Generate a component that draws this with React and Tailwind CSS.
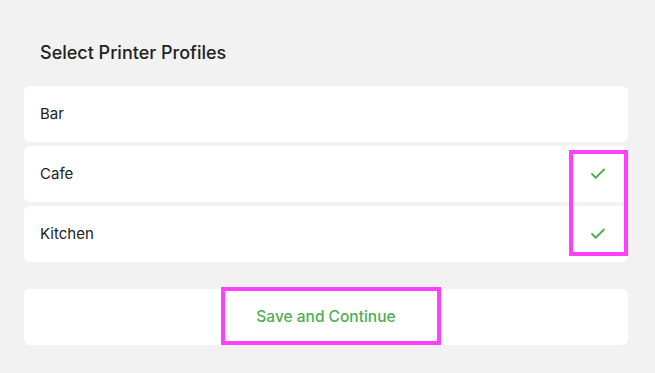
import { Check } from 'lucide-react';

const profiles = [
  { name: 'Bar', selected: false },
  { name: 'Cafe', selected: true },
  { name: 'Kitchen', selected: true },
];

export default function App() {
  return (
    <div className="relative min-h-[373px] w-[655px] bg-[#f2f2f2] pl-6 pr-[27px] pt-[41px] font-['Inter',sans-serif] text-[#222]">
      <h2 className="pl-4 text-[18px] font-medium leading-[24px]">Select Printer Profiles</h2>

      <div className="mt-[21px] flex flex-col gap-1">
        {profiles.map((p) => (
          <div key={p.name} className="flex h-14 items-center justify-between rounded-md bg-white pl-4 pr-[21px]">
            <span className="text-[15px]">{p.name}</span>
            {p.selected && <Check size={18} strokeWidth={2.5} className="text-[#4caf50]" />}
          </div>
        ))}
      </div>

      <button className="mt-[27px] flex h-14 w-full items-center justify-center rounded-md bg-white text-[15.5px] font-medium text-[#4caf50]">
        Save and Continue
      </button>

      {/* annotation boxes */}
      <div className="absolute left-[569px] top-[150px] h-[106px] w-[59px] border-4 border-[#ff40ff]" />
      <div className="absolute left-[221px] top-[287px] h-[58px] w-[220px] border-4 border-[#ff40ff]" />
    </div>
  );
}
